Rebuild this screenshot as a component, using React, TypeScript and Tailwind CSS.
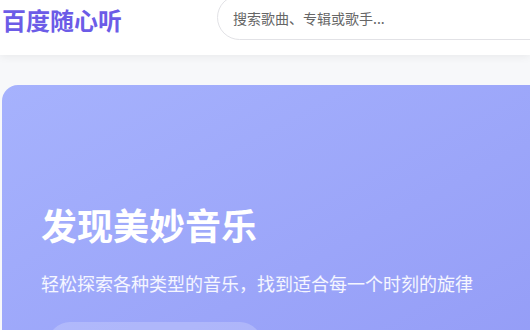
export default function App() {
  return (
    <div
      className="w-[530px] h-[330px] overflow-hidden bg-[#f7f8fa]"
      style={{ fontFamily: '"Noto Sans CJK SC", "Noto Sans", sans-serif' }}
    >
      <header className="h-[55px] bg-white shadow-[0_2px_8px_rgba(0,0,0,0.06)] flex items-start relative z-10">
        <div className="pl-[2px] pt-[2px] w-[217px] shrink-0">
          <h1 className="text-[24px] leading-[36px] font-bold text-[#6c5ce7]">百度随心听</h1>
        </div>
        <div className="-mt-[5px] h-[45px] w-[340px] shrink-0 rounded-full border border-[#e2e2e6] bg-white flex items-center pl-[15px]">
          <span className="text-[14px] text-[#666] pt-[1px]">搜索歌曲、专辑或歌手...</span>
        </div>
      </header>

      <main className="pt-[30px] pl-[2px]">
        <section className="w-[560px] h-[300px] rounded-2xl bg-gradient-to-br from-[#a6b2fd] to-[#939bf6] pl-[39px] pt-[112px]">
          <h2 className="text-[36px] leading-[54px] font-bold text-white">发现美妙音乐</h2>
          <p className="mt-[18px] text-[18px] leading-[28px] text-white/90">
            轻松探索各种类型的音乐，找到适合每一个时刻的旋律
          </p>
          <button className="mt-[25px] ml-[7px] h-[44px] w-[214px] rounded-[22px] bg-white/20 text-white text-[16px]">
            开始探索
          </button>
        </section>
      </main>
    </div>
  );
}
